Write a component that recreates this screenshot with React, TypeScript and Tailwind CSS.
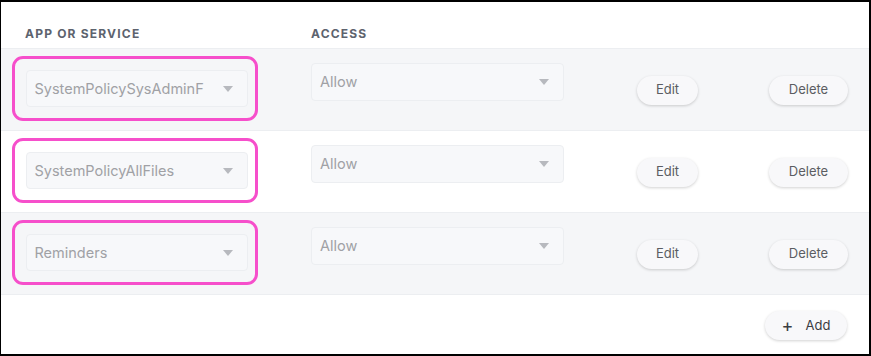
const rows = ['SystemPolicySysAdminF', 'SystemPolicyAllFiles', 'Reminders'];

function Caret() {
  return (
    <svg width="10" height="6" viewBox="0 0 10 6" className="shrink-0">
      <path d="M0 0 L10 0 L5 6 Z" fill="#b7b9be" />
    </svg>
  );
}

function Pill({ children, w }: { children: React.ReactNode; w: string }) {
  return (
    <button
      className={`flex h-[29px] ${w} items-center justify-center rounded-full bg-[#f8f8fa] text-[13px] text-[#5b5d62] shadow-[0_1px_3px_rgba(0,0,0,0.18)]`}
    >
      {children}
    </button>
  );
}

export default function App() {
  return (
    <div
      className="flex h-[356px] w-[871px] flex-col border-t-2 border-r-2 border-b-2 border-l border-black bg-white"
      style={{ fontFamily: 'Inter, Lato, sans-serif' }}
    >
      <div className="flex h-[47px] shrink-0 items-end border-b border-[#eceef1] pb-[5px] text-[12px] font-bold tracking-[0.1em] text-[#5d636e]">
        <div className="w-[310px] pl-[24px]">APP OR SERVICE</div>
        <div>ACCESS</div>
      </div>
      {rows.map((name, i) => (
        <div
          key={name}
          className={`flex h-[82px] shrink-0 border-b border-[#eceef1] ${i % 2 === 0 ? 'bg-[#f5f6f8]' : 'bg-white'}`}
        >
          <div className="w-[310px] pl-[11px] pt-[7px]">
            <div className="flex h-[65px] w-[246px] items-center rounded-[11px] border-[3.5px] border-[#f64fcb] pl-[10.5px]">
              <div className="flex h-[37px] w-[222px] items-center justify-between rounded-[4px] border border-[#eceef1] bg-[#f7f8fa] pl-[8px] pr-[14px] text-[14.5px] text-[#a0a1a5]">
                <span>{name}</span>
                <Caret />
              </div>
            </div>
          </div>
          <div className="pt-[14px]">
            <div className="flex h-[38px] w-[253px] items-center justify-between rounded-[4px] border border-[#eceef1] bg-[#f7f8fa] pl-[8px] pr-[14px] text-[14.5px] text-[#a0a1a5]">
              <span>Allow</span>
              <Caret />
            </div>
          </div>
          <div className="flex flex-1 items-center pt-[1px] pl-[73px]">
            <Pill w="w-[61px]">Edit</Pill>
            <div className="ml-[71px]">
              <Pill w="w-[79px]">Delete</Pill>
            </div>
          </div>
        </div>
      ))}
      <div className="flex flex-1 items-start justify-end pr-[22px] pt-[16px]">
        <Pill w="w-[82px]">
          <span className="mr-[12px] text-[18px] leading-none text-[#3b3d42]">+</span>
          <span className="text-[#3b3d42]">Add</span>
        </Pill>
      </div>
    </div>
  );
}
